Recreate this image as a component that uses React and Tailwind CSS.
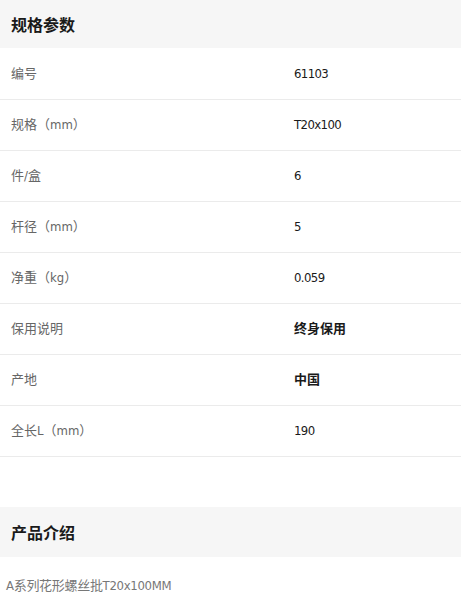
const specs = [
  { label: '编号', value: '61103' },
  { label: '规格（mm）', value: 'T20x100' },
  { label: '件/盒', value: '6' },
  { label: '杆径（mm）', value: '5' },
  { label: '净重（kg）', value: '0.059' },
  { label: '保用说明', value: '终身保用', bold: true },
  { label: '产地', value: '中国', bold: true },
  { label: '全长L（mm）', value: '190' },
];

const font = { fontFamily: '"DejaVu Sans Condensed", "Noto Sans CJK SC", sans-serif' };
const cjk = { fontFamily: '"Noto Sans CJK SC", sans-serif' };

export default function App() {
  return (
    <div className="w-[461px] bg-white" style={font}>
      {/* Specs */}
      <div className="h-[48px] bg-[#f6f6f6] flex items-center px-[11px]">
        <h2 className="text-[16px] font-bold text-[#1a1a1a]" style={cjk}>规格参数</h2>
      </div>
      <div className="pt-[1px]">
        {specs.map((s) => (
          <div key={s.label} className="h-[51px] flex items-center border-b border-[#ebebeb]">
            <div className="w-[294px] pl-[11px] text-[13px] text-[#666]">{s.label}</div>
            <div className={`text-[13px] text-[#1a1a1a] ${s.bold ? 'font-bold' : 'tracking-[-0.6px]'}`}>{s.value}</div>
          </div>
        ))}
      </div>

      {/* Intro */}
      <div className="mt-[50px] h-[50px] bg-[#f6f6f6] flex items-center px-[11px]">
        <h2 className="text-[16px] font-bold text-[#1a1a1a]" style={cjk}>产品介绍</h2>
      </div>
      <p className="pt-[19px] pl-[6px] text-[13px] text-[#777] tracking-[-0.3px]">A系列花形螺丝批T20x100MM</p>
    </div>
  );
}
